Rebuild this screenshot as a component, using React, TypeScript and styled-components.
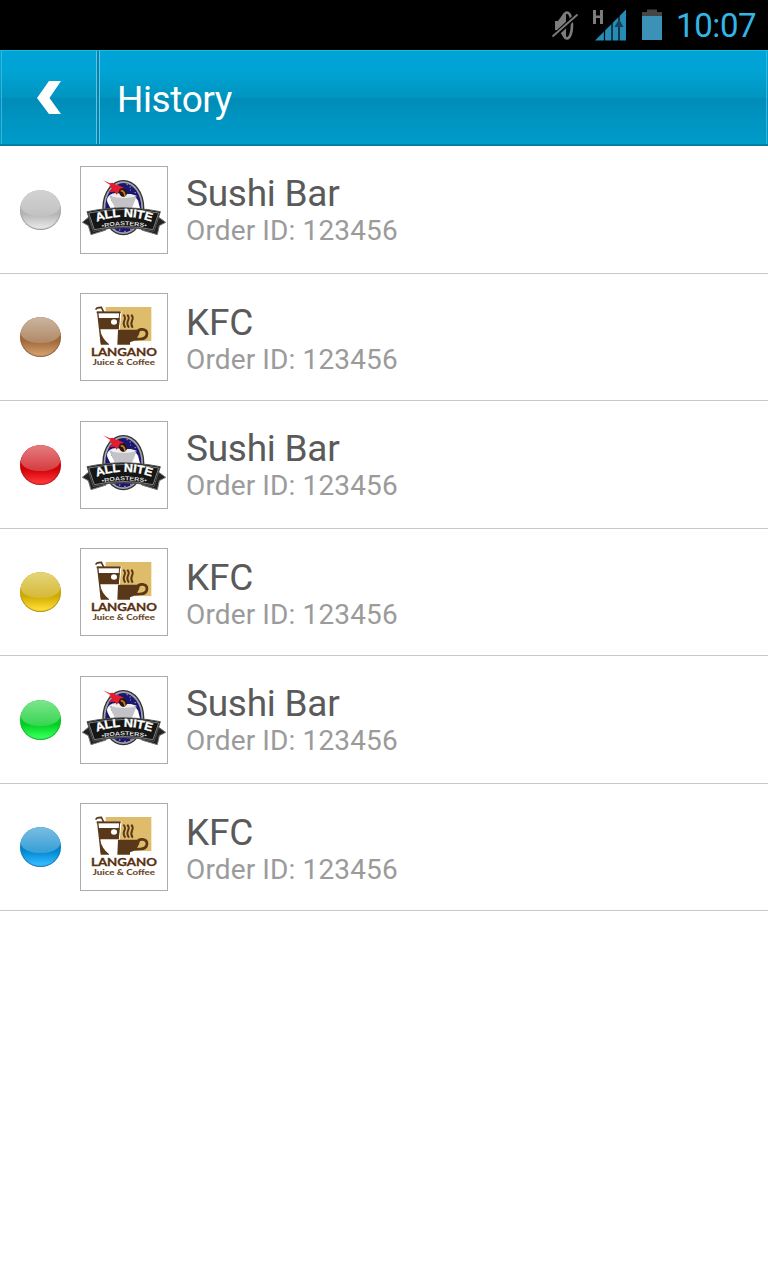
import React from "react";
import styled, { createGlobalStyle } from "styled-components";

const GlobalStyle = createGlobalStyle`
  body {
    margin: 0;
    background: #fff;
    font-family: Roboto, "Liberation Sans", sans-serif;
  }
`;

const Screen = styled.div`
  display: flex;
  flex-direction: column;
  width: 768px;
  height: 1280px;
  background: #fff;
`;

const StatusBar = styled.div`
  display: flex;
  justify-content: flex-end;
  height: 50px;
  background: #000;
`;

const Clock = styled.span`
  width: 80px;
  margin-left: 5px;
  padding-right: 12px;
  font-size: 33px;
  line-height: 52px;
  letter-spacing: -0.4px;
  white-space: nowrap;
  color: #33b5e5;
`;

const Header = styled.header`
  box-sizing: border-box;
  display: flex;
  height: 96px;
  border-top: 1px solid #0cc0e0;
  border-bottom: 2px solid #007ea8;
  background: linear-gradient(#00a4d6 0%, #00a3d4 22%, #0095c0 50%, #008cb6 51%, #0093c0 70%, #009bca 100%);
`;

const BackButton = styled.div`
  box-sizing: border-box;
  display: flex;
  width: 96px;
  margin-left: 1px;
  padding: 30px 0 0 35px;
  border-left: 1px solid #35b5db;
  border-right: 1px solid #62c3e0;
`;

const TitleArea = styled.div`
  box-sizing: border-box;
  flex: 1;
  margin: 0 1px 0 2px;
  padding-left: 17px;
  border-left: 1px solid #62c3e0;
  border-right: 1px solid #35b5db;
  box-shadow: -2px 0 0 #0083ad;
`;

const Title = styled.h1`
  margin: 0;
  font-size: 37px;
  font-weight: 400;
  line-height: 97px;
  letter-spacing: -0.4px;
  color: #fff;
`;

const Row = styled.div<{ $compact: boolean }>`
  box-sizing: border-box;
  display: flex;
  align-items: flex-start;
  height: ${(p) => (p.$compact ? 127 : 128)}px;
  padding: ${(p) => (p.$compact ? 19 : 20)}px 0 0 20px;
  border-bottom: 1px solid #c8c8c8;
`;

const Ball = styled.div<{ $top: string; $mid: string; $base: string; $low: string }>`
  width: 41px;
  height: 40px;
  margin: 24px 19px 0 0;
  border-radius: 50%;
  background: linear-gradient(${(p) => p.$base} 60%, ${(p) => p.$low} 92%);
  box-shadow: inset 0 -1px 1px rgba(0, 0, 0, 0.35);
  overflow: hidden;

  &::before {
    content: "";
    display: block;
    width: 39px;
    height: 26px;
    margin: 0 1px;
    border-radius: 20px 20px 20px 20px / 16px 16px 10px 10px;
    background: linear-gradient(${(p) => p.$top}, ${(p) => p.$mid});
  }
`;

const Thumb = styled.div`
  box-sizing: border-box;
  width: 88px;
  height: 88px;
  border: 1px solid #acacac;
  background: #fff;

  svg {
    display: block;
  }
`;

const Info = styled.div<{ $compact: boolean }>`
  padding: ${(p) => (p.$compact ? 6 : 4)}px 0 0 18px;
`;

const Name = styled.div`
  font-size: 37px;
  line-height: 48px;
  letter-spacing: -0.25px;
  color: #5a5a5a;
`;

const Order = styled.div`
  margin-top: -6px;
  font-size: 28px;
  line-height: 38px;
  letter-spacing: 0.13px;
  color: #9b9b9b;
`;

const StatusIcons = () => (
  <svg width="120" height="50" viewBox="0 0 120 50">
    <g fill="#7c7c7c">
      <path d="M4 21h3l5-7 3-2v26l-3-2-5-6H4z" />
      <ellipse cx="16" cy="25.500" rx="5" ry="13" fill="none" stroke="#7c7c7c" strokeWidth="2.600" />
      <path d="M2 37L26 15" stroke="#000" strokeWidth="5" />
      <path d="M1.500 36.500L26.500 14.500" stroke="#7c7c7c" strokeWidth="1.800" />
      <path d="M42 10h3v5.500h4V10h3v14h-3v-6h-4v6h-3z" />
    </g>
    <path d="M44 40.500L75 9.500V40.500z" fill="#268bb5" />
    <path d="M53.500 28V41M61 22V41M68 14V41" stroke="#000" strokeWidth="1.200" />
    <path d="M63.500 27l4.500-8 4.500 8z" fill="#164459" />
    <path d="M91 12h5V9.500h10V12h5v4H91z" fill="#454545" />
    <path d="M91 16h20v24H91z" fill="#3b92b6" />
  </svg>
);

const BackIcon = () => (
  <svg width="24" height="34" viewBox="0 0 24 34">
    <path d="M12 0H24L12.500 17 24 33H12L0 17z" fill="#fff" />
  </svg>
);

const RoastersLogo = () => (
  <svg width="86" height="86" viewBox="3 3 258 258">
    <defs>
      <path id="arcTop" d="M50 167Q130 138 216 167" />
      <path id="arcLow" d="M66 185Q130 171 202 185" />
    </defs>
    <ellipse cx="130" cy="125" rx="63" ry="83" fill="#333" />
    <ellipse cx="130" cy="125" rx="59" ry="79" fill="#a3a3ad" />
    <ellipse cx="130" cy="125" rx="54" ry="74" fill="#1b176f" />
    <path
      d="M113 58h2M149 63h3M164 80h3M88 112h3M172 105h3M140 56h3M117 192h4M133 196h4M151 190h3M150 72h2"
      stroke="#c9c9f5"
      strokeWidth="3"
    />
    <path d="M91 86Q78 94 82 108L94 132 107 122 94 103M156 88Q170 94 175 107L182 134 155 128z" fill="#fff" />
    <path d="M88 88Q104 76 123 84L153 84 170 89Q151 100 126 99 100 99 88 88z" fill="#eee" />
    <path d="M88 90Q130 102 170 91L155 128Q145 134 106 128z" fill="#c3c3c7" />
    <ellipse cx="129" cy="80" rx="11" ry="13" fill="#2c1607" transform="rotate(-25 129 80)" />
    <path d="M122 75Q133 73 135 90" stroke="#bd812f" strokeWidth="5" fill="none" />
    <path d="M69 43L90 52 98 50 108 56Q122 58 132 66L120 68 116 78 110 86 104 77 84 78 98 70 87 60 92 58z" fill="#e51c2d" />
    <path
      d="M30 150L7 169 25 179 33 206 78 192 71 168zM231 150L257 169 238 179 232 206 185 192 192 168z"
      fill="#222"
      stroke="#777"
      strokeWidth="3"
    />
    <path d="M21 137L55 131Q130 120 205 131L241 137 222 196Q130 174 40 196z" fill="#161616" stroke="#555" strokeWidth="3" />
    <path d="M26 141Q130 120 236 141L219 191Q130 172 43 191z" fill="none" stroke="#b5b5b5" strokeWidth="2" />
    <text fontFamily="Liberation Sans, sans-serif" fontWeight="700" fontSize="35" fill="#fff" stroke="#fff" strokeWidth="1">
      <textPath href="#arcTop" textLength="168" lengthAdjust="spacingAndGlyphs">ALL NITE</textPath>
    </text>
    <text fontFamily="Liberation Sans, sans-serif" fontWeight="700" fontSize="17" fill="#ddd">
      <textPath href="#arcLow" textLength="134" lengthAdjust="spacingAndGlyphs">•ROASTERS•</textPath>
    </text>
  </svg>
);

const LanganoLogo = () => (
  <svg width="86" height="86" viewBox="3 3 258 258">
    <path d="M77 42H214V144H77z" fill="#dfbc69" />
    <path d="M51 57H122L112 154H62z" fill="#fff" stroke="#fff" strokeWidth="5" />
    <path d="M48 50Q48 43 64 43L71 57" fill="none" stroke="#59381a" strokeWidth="5" />
    <path d="M50 55H122V61H50z" fill="#59381a" />
    <path d="M53 57L64 154" stroke="#59381a" strokeWidth="4" />
    <path d="M119 57L115 108" stroke="#59381a" strokeWidth="3" />
    <path d="M55 75H119L116 109H59z" fill="#59381a" />
    <ellipse cx="102" cy="87" rx="9" ry="8" fill="#fff" />
    <path d="M60 109Q65 137 87 153V155H63z" fill="#59381a" />
    <path d="M62 111H112V154H91Q68 139 62 111z" fill="#fff" />
    <path d="M114 110H180Q178 139 150 148V155H112z" fill="#59381a" />
    <path d="M172 119Q174 108 188 109 201 111 201 122 200 139 178 138L163 139" fill="none" stroke="#59381a" strokeWidth="8" />
    <path
      d="M130 65Q138 73 133 83T136 104M142 65Q149 73 144 83T147 104M154 65Q161 73 156 83T158 104"
      stroke="#59381a"
      strokeWidth="6"
      fill="none"
    />
    <text
      x="33"
      y="190"
      textLength="198"
      lengthAdjust="spacingAndGlyphs"
      fontFamily="Lato, sans-serif"
      fontWeight="700"
      fontSize="31"
      fill="#59300f"
      stroke="#59300f"
      strokeWidth="0.8"
    >
      LANGANO
    </text>
    <text
      x="38"
      y="215"
      textLength="187"
      lengthAdjust="spacingAndGlyphs"
      fontFamily="Lato, sans-serif"
      fontWeight="900"
      fontSize="23"
      fill="#694628"
    >
      Juice &amp; Coffee
    </text>
  </svg>
);

const balls = {
  silver: { $top: "#d3d3d3", $mid: "#c2c2c2", $base: "#b5b5b5", $low: "#e4e4e4" },
  brown: { $top: "#cbb5a0", $mid: "#b08966", $base: "#a06a3c", $low: "#d09a6a" },
  red: { $top: "#e57c7f", $mid: "#d53b3f", $base: "#d00006", $low: "#ff3236" },
  yellow: { $top: "#e5d57c", $mid: "#d5b935", $base: "#d0aa00", $low: "#fddb30" },
  green: { $top: "#7ee58e", $mid: "#36d550", $base: "#00cf22", $low: "#32ff55" },
  blue: { $top: "#7cbde2", $mid: "#359fd5", $base: "#0087cf", $low: "#32b8ff" },
};

const orders: { ball: keyof typeof balls; name: string; id: string }[] = [
  { ball: "silver", name: "Sushi Bar", id: "123456" },
  { ball: "brown", name: "KFC", id: "123456" },
  { ball: "red", name: "Sushi Bar", id: "123456" },
  { ball: "yellow", name: "KFC", id: "123456" },
  { ball: "green", name: "Sushi Bar", id: "123456" },
  { ball: "blue", name: "KFC", id: "123456" },
];

export default function App() {
  return (
    <Screen>
      <GlobalStyle />
      <StatusBar>
        <StatusIcons />
        <Clock>10:07</Clock>
      </StatusBar>
      <Header>
        <BackButton>
          <BackIcon />
        </BackButton>
        <TitleArea>
          <Title>History</Title>
        </TitleArea>
      </Header>
      {orders.map((o, i) => {
        const compact = i % 2 === 1;
        return (
          <Row key={i} $compact={compact}>
            <Ball {...balls[o.ball]} />
            <Thumb>{compact ? <LanganoLogo /> : <RoastersLogo />}</Thumb>
            <Info $compact={compact}>
              <Name>{o.name}</Name>
              <Order>Order ID: {o.id}</Order>
            </Info>
          </Row>
        );
      })}
    </Screen>
  );
}
